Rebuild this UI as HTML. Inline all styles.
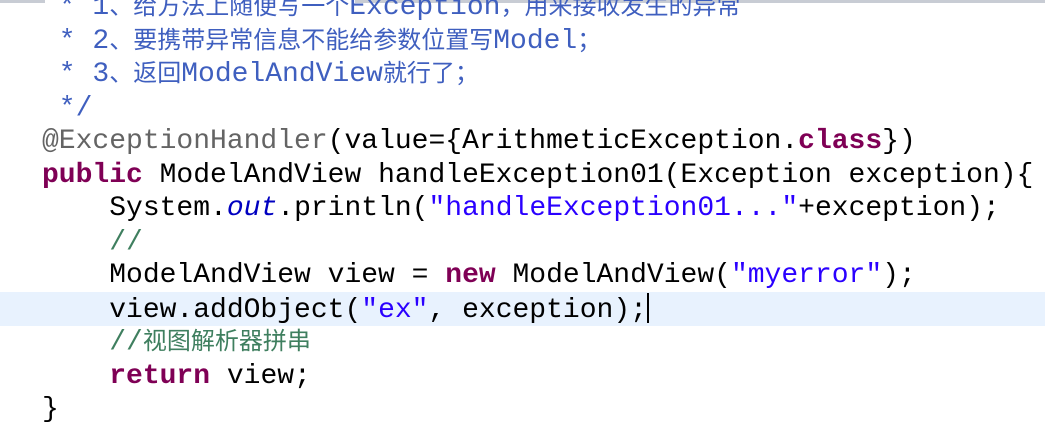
<!DOCTYPE html>
<html><head><meta charset="utf-8"><style>
html,body{margin:0;padding:0;background:#fff;width:1045px;height:428px;overflow:hidden;position:relative}
.topbar{position:absolute;top:0;height:3px;background:#c8ccd4}
.hl{position:absolute;left:0;top:292px;width:1045px;height:34px;background:#e8f2fe}
.code{position:absolute;left:42px;top:-9px;margin:0;font-family:"Liberation Mono","Noto Sans CJK SC",monospace;font-size:28px;color:#000}
.code div{height:33.5px;line-height:33.5px;white-space:pre;overflow:visible}
.c{font-family:"Noto Sans CJK SC",sans-serif;font-size:24px;line-height:0}
.jd{color:#3f5fbf}.k{color:#7f0055;font-weight:bold}.s{color:#2a00ff}.cm{color:#3f7f5f}.an{color:#646464}.o{color:#0000c0;font-style:italic}
.cur{display:inline-block;width:2px;height:30px;background:#000;vertical-align:-6px;line-height:0}
</style></head><body>
<div class="topbar" style="left:0;width:45px"></div>
<div class="topbar" style="left:355px;width:690px"></div>
<div class="hl"></div>
<div class="code">
<div class="jd"> * 1<span class="c">、给方法上随便写一个</span>Exception<span class="c">，用来接收发生的异常</span></div>
<div class="jd"> * 2<span class="c">、要携带异常信息不能给参数位置写</span>Model<span class="c">；</span></div>
<div class="jd"> * 3<span class="c">、返回</span>ModelAndView<span class="c">就行了；</span></div>
<div class="jd"> */</div>
<div><span class="an">@ExceptionHandler</span>(value={ArithmeticException.<span class="k">class</span>})</div>
<div><span class="k">public</span> ModelAndView handleException01(Exception exception){</div>
<div>    System.<span class="o">out</span>.println(<span class="s">"handleException01..."</span>+exception);</div>
<div>    <span class="cm">//</span></div>
<div>    ModelAndView view = <span class="k">new</span> ModelAndView(<span class="s">"myerror"</span>);</div>
<div>    view.addObject(<span class="s">"ex"</span>, exception);<span class="cur"></span></div>
<div>    <span class="cm">//<span class="c">视图解析器拼串</span></span></div>
<div>    <span class="k">return</span> view;</div>
<div>}</div>
</div>
</body></html>
